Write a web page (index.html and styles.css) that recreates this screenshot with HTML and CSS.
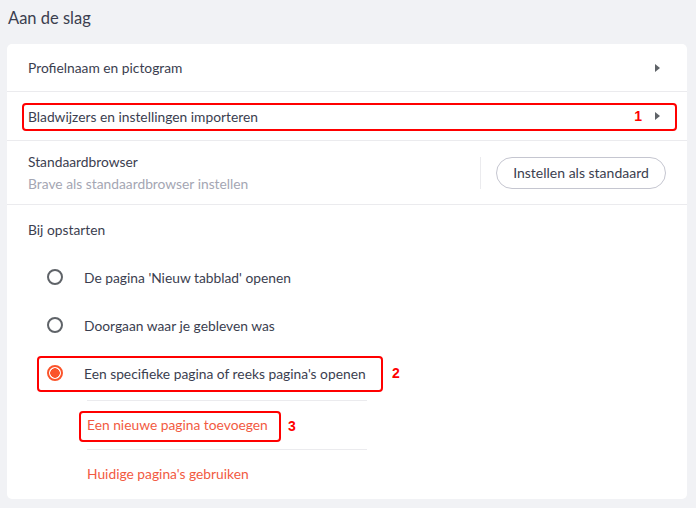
FILE: index.html
```html
<!DOCTYPE html>
<html lang="nl">
<head>
<meta charset="utf-8">
<link rel="stylesheet" href="styles.css">
</head>
<body>
<h2 class="page-title">Aan de slag</h2>
<div class="card">
  <div class="row nav-row">
    <span class="label">Profielnaam en pictogram</span>
    <span class="arrow"></span>
  </div>
  <div class="row nav-row import-row">
    <span class="label">Bladwijzers en instellingen importeren</span>
    <span class="badge-num">1</span>
    <span class="arrow"></span>
    <span class="annot annot-1"></span>
  </div>
  <div class="row default-row">
    <div class="default-text">
      <div class="label">Standaardbrowser</div>
      <div class="sublabel">Brave als standaardbrowser instellen</div>
    </div>
    <div class="vsep"></div>
    <button class="pill-btn">Instellen als standaard</button>
  </div>
  <div class="startup">
    <div class="startup-title">Bij opstarten</div>
    <div class="radio-list">
      <div class="radio-row"><span class="radio"></span><span class="label">De pagina 'Nieuw tabblad' openen</span></div>
      <div class="radio-row"><span class="radio"></span><span class="label">Doorgaan waar je gebleven was</span></div>
      <div class="radio-row selected"><span class="radio on"></span><span class="label">Een specifieke pagina of reeks pagina's openen</span><span class="annot annot-2"></span><span class="badge-num num-2">2</span></div>
    </div>
    <div class="links">
      <div class="link-row"><span class="link">Een nieuwe pagina toevoegen</span><span class="annot annot-3"></span><span class="badge-num num-3">3</span></div>
      <div class="link-row"><span class="link">Huidige pagina's gebruiken</span></div>
    </div>
  </div>
</div>
</body>
</html>
```
FILE: styles.css
```css
* { box-sizing: border-box; }
html, body { margin: 0; padding: 0; }
body {
  background: #f1f2f5;
  font-family: "Lato", "Noto Sans", sans-serif;
  color: #3b3e4f;
  width: 696px;
  height: 508px;
  overflow: hidden;
}
.page-title {
  margin: 0;
  font-weight: 400;
  font-size: 16.5px;
  line-height: 20px;
  padding: 8px 0 0 8px;
  height: 44px;
  color: #3b3e4f;
}
.card {
  margin-left: 7px;
  width: 680px;
  height: 455px;
  background: #fff;
  border-radius: 5px;
}
.label { font-size: 13.8px; color: #3b3e4f; }
.row {
  display: flex;
  align-items: center;
  padding: 0 27px 0 21px;
  border-bottom: 1px solid #ebebee;
  position: relative;
}
.nav-row { height: 48px; }
.import-row { height: 49px; }
.nav-row .label { flex: 1; }
.arrow {
  width: 0; height: 0;
  border-top: 4px solid transparent;
  border-bottom: 4px solid transparent;
  border-left: 5px solid #5f6368;
}
.badge-num {
  font-family: "Liberation Sans", Arial, sans-serif;
  font-weight: 700;
  font-size: 14px;
  color: #f00;
}
.import-row .badge-num { margin-right: 13px; }
.annot {
  position: absolute;
  border: 2.5px solid #f00;
  border-radius: 4px;
  pointer-events: none;
}
.annot-1 { left: 15px; right: 10px; top: 11px; height: 28px; }
.default-row { height: 64px; }
.default-text { flex: 1; display: flex; flex-direction: column; gap: 5px; }
.sublabel { font-size: 13.8px; color: #a4a6b3; }
.vsep { width: 1px; height: 32px; background: #ebebee; margin-right: 15px; }
.pill-btn {
  height: 32px;
  width: 170px;
  border: 1px solid #c5c6d0;
  border-radius: 16px;
  background: #fff;
  font-family: inherit;
  font-size: 14px;
  color: #3b3e4f;
  margin-right: -6px;
}
.startup { padding: 17px 0 0 0; }
.startup-title { padding-left: 21px; font-size: 13.8px; line-height: 16px; height: 25px; }
.radio-list { padding-top: 6px; }
.radio-row {
  height: 48px;
  display: flex;
  align-items: center;
  padding-left: 40px;
  position: relative;
}
.radio {
  width: 16px; height: 16px;
  border: 2px solid #5f6368;
  border-radius: 50%;
  margin-right: 21px;
  flex: none;
}
.radio.on {
  border-color: #fb542b;
  background: radial-gradient(circle, #fb542b 0 4.5px, #fff 5px);
}
.annot-2 { left: 30px; top: 7px; width: 346px; height: 36px; }
.num-2 { position: absolute; left: 385px; top: 16px; }
.links { padding-left: 80px; padding-top: 3px; width: 360px; }
.link-row {
  height: 49px;
  display: flex;
  align-items: center;
  padding-bottom: 2px;
  border-top: 1px solid #ebebee;
  position: relative;
}
.link { font-size: 13.8px; color: #f25a42; }
.annot-3 { left: -8px; top: 10px; width: 202px; height: 31px; }
.num-3 { position: absolute; left: 201px; top: 17px; }
```
